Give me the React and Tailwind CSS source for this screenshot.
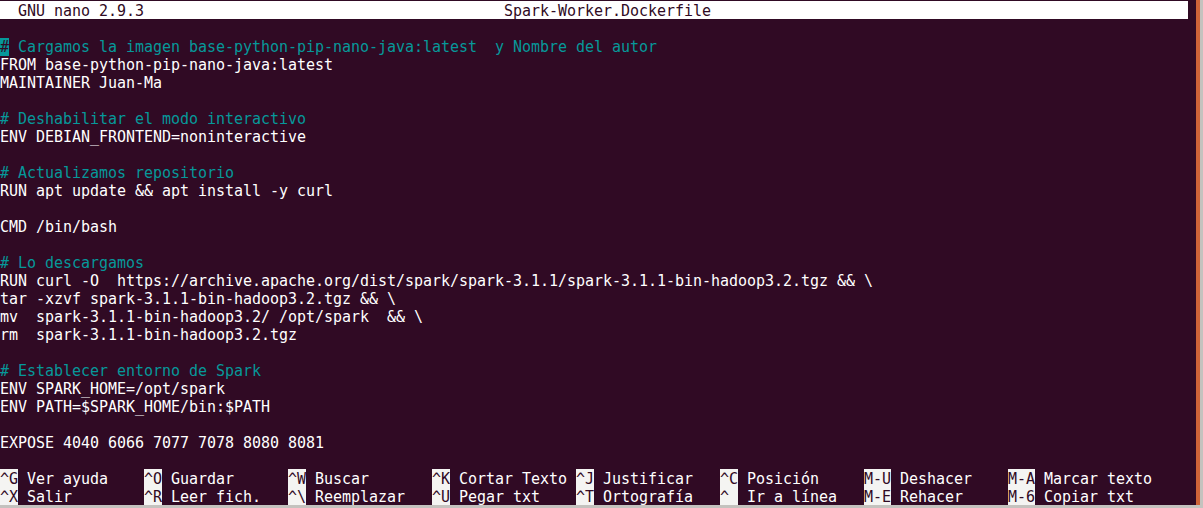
import React from "react";

const lines = [
  { t: "" },
  { t: "# Cargamos la imagen base-python-pip-nano-java:latest  y Nombre del autor", c: true, cursor: true },
  { t: "FROM base-python-pip-nano-java:latest" },
  { t: "MAINTAINER Juan-Ma" },
  { t: "" },
  { t: "# Deshabilitar el modo interactivo", c: true },
  { t: "ENV DEBIAN_FRONTEND=noninteractive" },
  { t: "" },
  { t: "# Actualizamos repositorio", c: true },
  { t: "RUN apt update && apt install -y curl" },
  { t: "" },
  { t: "CMD /bin/bash" },
  { t: "" },
  { t: "# Lo descargamos", c: true },
  { t: "RUN curl -O  https://archive.apache.org/dist/spark/spark-3.1.1/spark-3.1.1-bin-hadoop3.2.tgz && \\" },
  { t: "tar -xzvf spark-3.1.1-bin-hadoop3.2.tgz && \\" },
  { t: "mv  spark-3.1.1-bin-hadoop3.2/ /opt/spark  && \\" },
  { t: "rm  spark-3.1.1-bin-hadoop3.2.tgz" },
  { t: "" },
  { t: "# Establecer entorno de Spark", c: true },
  { t: "ENV SPARK_HOME=/opt/spark" },
  { t: "ENV PATH=$SPARK_HOME/bin:$PATH" },
  { t: "" },
  { t: "EXPOSE 4040 6066 7077 7078 8080 8081" },
  { t: "" },
];

const help1 = [
  ["^G", "Ver ayuda"],
  ["^O", "Guardar"],
  ["^W", "Buscar"],
  ["^K", "Cortar Texto"],
  ["^J", "Justificar"],
  ["^C", "Posición"],
  ["M-U", "Deshacer"],
  ["M-A", "Marcar texto"],
];
const help2 = [
  ["^X", "Salir"],
  ["^R", "Leer fich."],
  ["^\\", "Reemplazar"],
  ["^U", "Pegar txt"],
  ["^T", "Ortografía"],
  ["^_", "Ir a línea"],
  ["M-E", "Rehacer"],
  ["M-6", "Copiar txt"],
];

function HelpRow({ items }) {
  return (
    <div className="flex h-[18px] leading-[20px] whitespace-pre">
      {items.map(([k, l]) => (
        <div key={k} className="w-[144px] shrink-0 flex items-start">
          <span className="bg-[#f4f4f2] text-[#300a24] h-[18px]">{k}</span>
          <span className="text-white">{" " + l}</span>
        </div>
      ))}
    </div>
  );
}

export default function App() {
  return (
    <div
      className="w-[1203px] h-[508px] bg-[#c4c2be] flex flex-col overflow-hidden"
      style={{ fontFamily: '"DejaVu Sans Mono", "Liberation Mono", monospace' }}
    >
      <div className="flex h-[505px]">
        <div className="w-[1196px] h-[505px] bg-[#300a24] pt-[1px] text-[15px] tracking-[-0.03px]">
          <div className="w-[1188px] h-[18px] leading-[20px] bg-[#ffffff] text-[#300a24] whitespace-pre flex">
            <span className="w-[504px] shrink-0">{"  GNU nano 2.9.3"}</span>
            <span>Spark-Worker.Dockerfile</span>
          </div>
          {lines.map((ln, i) => (
            <div
              key={i}
              className={
                "h-[18px] leading-[20px] whitespace-pre " +
                (ln.c ? "text-[#06989a]" : "text-white")
              }
            >
              {ln.cursor ? (
                <>
                  <span className="bg-[#06989a] text-[#300a24]">#</span>
                  {ln.t.slice(1)}
                </>
              ) : (
                ln.t || " "
              )}
            </div>
          ))}
          <HelpRow items={help1} />
          <HelpRow items={help2} />
        </div>
        <div className="w-[4px] h-full bg-[#cf6338]" />
        <div className="w-[3px] h-full bg-[#c4c2be]" />
      </div>
      <div className="h-[3px] bg-[#c4c2be]" />
    </div>
  );
}
